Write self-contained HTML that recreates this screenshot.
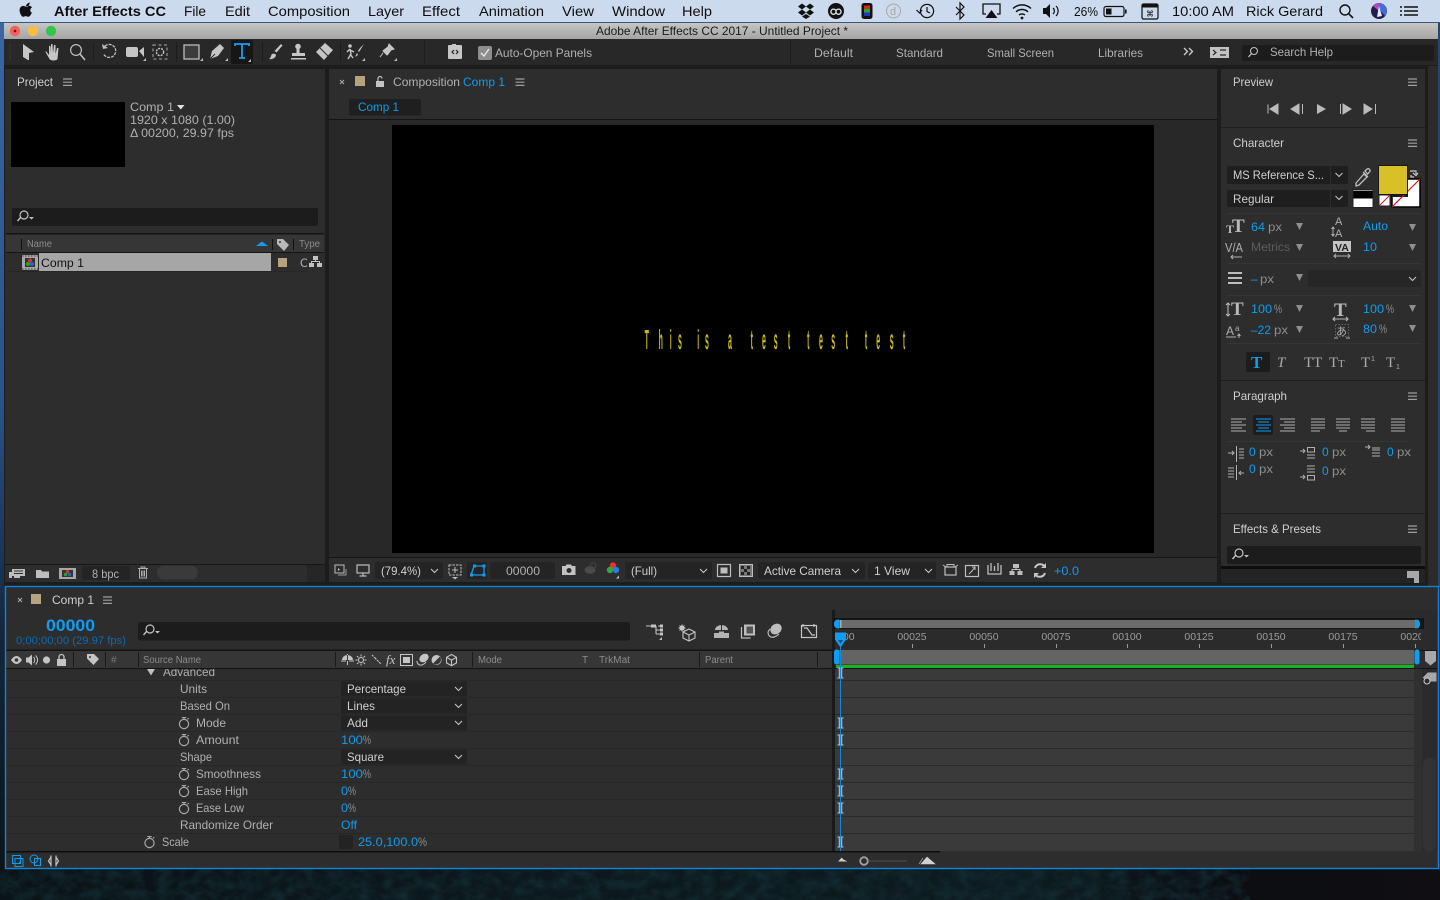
<!DOCTYPE html>
<html><head><meta charset="utf-8"><title>After Effects</title>
<style>
html,body{margin:0;padding:0;background:#111;overflow:hidden}
svg{display:block;position:absolute;left:0;top:0}
text{font-family:"Liberation Sans","DejaVu Sans",sans-serif;white-space:pre}
.m{font-size:14px;fill:#0e0e10}
.p{font-size:12px;fill:#b0b0b0}
.w{font-size:12px;fill:#cfcfcf}
.b{font-size:12px;fill:#109cf0}
.g{font-size:12px;fill:#8e8e8e}
.s{font-size:10px;fill:#8c8c8c}
.r{font-size:10.5px;fill:#9a9a9a}
.i{fill:#bdbdbd}
.l{fill:none;stroke:#bdbdbd;stroke-width:1.2}
.u{fill:none;stroke:#109cf0;stroke-width:1.3}
</style></head><body>
<svg width="1440" height="900" viewBox="0 0 1440 900" xmlns="http://www.w3.org/2000/svg">
<defs>
<linearGradient id="edge" x1="0" y1="0" x2="0" y2="1"><stop offset="0" stop-color="#3a66a4"/><stop offset=".45" stop-color="#2b5289"/><stop offset=".72" stop-color="#14263c"/><stop offset="1" stop-color="#0b1418"/></linearGradient>
<linearGradient id="tb" x1="0" y1="0" x2="0" y2="1"><stop offset="0" stop-color="#c6c6c6"/><stop offset="1" stop-color="#a4a4a4"/></linearGradient>
<linearGradient id="forestfade" x1="0" y1="0" x2="1" y2="0"><stop offset="0" stop-color="#0a1316"/><stop offset=".72" stop-color="#0d1c20"/><stop offset=".85" stop-color="#0b0e11"/><stop offset="1" stop-color="#100e12"/></linearGradient>
<filter id="noise" x="0" y="0" width="100%" height="100%" color-interpolation-filters="sRGB"><feTurbulence type="fractalNoise" baseFrequency=".07 .1" numOctaves="3" seed="4"/><feColorMatrix values="0 0 0 0 .07  0 0 0 0 .17  0 0 0 0 .2  1.8 0 0 0 -.6"/></filter>
<g id="h"><path d="M0 0h9M0 3.2h9M0 6.4h9" stroke="#9e9e9e" stroke-width="1.2" fill="none"/></g>
<path id="c" d="M0 0l3.5 3.5L7 0" fill="none" stroke="#c4c4c4" stroke-width="1.1"/>
<path id="v" d="M0 0h7L3.5 7z" fill="#8f8f8f"/>
<g id="sw"><circle cx="0" cy="0" r="4.6" fill="none" stroke="#a8a8a8" stroke-width="1.2"/><path d="M-2.2-6.4h4.4M0-6.4v2M3.4-4.6l1.4-1.3" stroke="#a8a8a8" stroke-width="1.1" fill="none"/></g>
<path id="ib" d="M-3-5h6M-3 5h6M-1.2-5v10M1.2-5v10" fill="none" stroke="#a9c4d9" stroke-width="1.1"/>
<g id="srch"><circle cx="5" cy="-2" r="4" fill="none" stroke="#c2c2c2" stroke-width="1.2"/><path d="M2-.0L-1.5 4" stroke="#c2c2c2" stroke-width="1.4"/><path d="M10 0h5l-2.500 2.500z" fill="#c2c2c2"/></g>
<path id="corner" d="M0 3L3 3L3 0z" fill="#bdbdbd"/>
</defs>

<!-- desktop -->
<rect width="1440" height="900" fill="url(#forestfade)"/>
<rect y="869" width="1250" height="31" filter="url(#noise)"/>
<rect x="0" y="22" width="6" height="850" fill="url(#edge)"/>
<rect x="1438" y="22" width="2" height="565" fill="#26466f"/>

<!-- menu bar -->
<rect width="1440" height="22" fill="#cbdaec"/>
<rect y="22" width="1440" height="1" fill="#3a5878"/>
<path d="M28.400 5.600c.9-1 1.500-1.900 1.300-3-1 .1-2.200.7-2.900 1.600-.6.7-1.100 1.900-.9 2.900 1.100.1 1.900-.5 2.500-1.500zM31.600 13.100c-.5 1.300-2 3.700-3.200 3.700-1 0-1.400-.7-2.600-.7-1.300 0-1.600.7-2.600.7-1.400 0-3.600-3.300-3.600-6.600 0-2.900 1.900-4.300 3.600-4.300 1.200 0 2 .8 2.700.8.6 0 1.700-.9 3-.9.6 0 2.200.2 3.100 1.600-2.600 1.600-2.200 4.900.6 5.700z" fill="#101012"/>
<text class="m" x="54" y="16" textLength="112" lengthAdjust="spacingAndGlyphs" style="font-weight:bold">After Effects CC</text>
<text class="m" x="184" y="16" textLength="22" lengthAdjust="spacingAndGlyphs">File</text>
<text class="m" x="225" y="16" textLength="25" lengthAdjust="spacingAndGlyphs">Edit</text>
<text class="m" x="268" y="16" textLength="82" lengthAdjust="spacingAndGlyphs">Composition</text>
<text class="m" x="368" y="16" textLength="36" lengthAdjust="spacingAndGlyphs">Layer</text>
<text class="m" x="422" y="16" textLength="38" lengthAdjust="spacingAndGlyphs">Effect</text>
<text class="m" x="479" y="16" textLength="65" lengthAdjust="spacingAndGlyphs">Animation</text>
<text class="m" x="562" y="16" textLength="32" lengthAdjust="spacingAndGlyphs">View</text>
<text class="m" x="612" y="16" textLength="53" lengthAdjust="spacingAndGlyphs">Window</text>
<text class="m" x="682" y="16" textLength="30" lengthAdjust="spacingAndGlyphs">Help</text>
<!-- status icons -->
<path d="M798 6.500l4-3 4 3-4 3zM806 6.500l4-3 4 3-4 3zM798 12.500l4-3 4 3-4 3zM806 12.500l4-3 4 3-4 3zM802 16.500l4-2.500 4 2.500-4 2.500z" fill="#111"/>
<circle cx="836" cy="11" r="8" fill="#111"/><path d="M831 11a2.600 2.600 0 0 1 5 0 2.600 2.600 0 1 0 5 0 2.600 2.600 0 0 0-5 0 2.600 2.600 0 1 1-5 0z" fill="none" stroke="#dfe8f2" stroke-width="1.300"/>
<rect x="861.500" y="3" width="11" height="16" rx="2.500" fill="#111"/><rect x="864" y="5.500" width="6" height="3.500" fill="#d22"/><rect x="864" y="9" width="6" height="3.500" fill="#2a2"/><rect x="864" y="12.500" width="6" height="3.500" fill="#23c"/>
<circle cx="893.500" cy="11" r="7" fill="none" stroke="#a6a6a6" stroke-width="1"/><text x="890" y="15" style="font-size:11px;fill:#a6a6a6">d</text>
<circle cx="927" cy="11" r="6.600" fill="none" stroke="#111" stroke-width="1.200"/><path d="M927 7v4.500l3 1.500M916.500 10l3 3 2.500-3" fill="none" stroke="#111" stroke-width="1.200"/>
<path d="M956 7l8 8-4 4V3l4 4-8 8" fill="none" stroke="#111" stroke-width="1.200"/>
<path d="M986 14h-3V4h17v10h-3" fill="none" stroke="#111" stroke-width="1.300"/><path d="M991.500 10l6 8h-12z" fill="#111"/>
<path d="M1013 8.500a13 13 0 0 1 18 0M1016 11.800a9 9 0 0 1 12 0M1019 15a5 5 0 0 1 6 0" fill="none" stroke="#111" stroke-width="1.400"/><circle cx="1022" cy="18" r="1.400" fill="#111"/>
<path d="M1043 8h3l4-4v14l-4-4h-3z" fill="#111"/><path d="M1053 8a4 4 0 0 1 0 6M1056 6a7 7 0 0 1 0 10" fill="none" stroke="#111" stroke-width="1.200"/>
<text class="m" x="1074" y="16" style="font-size:13px" textLength="24" lengthAdjust="spacingAndGlyphs">26%</text>
<rect x="1104" y="6.500" width="20" height="10" rx="2" fill="none" stroke="#111" stroke-width="1.200"/><rect x="1106" y="8.500" width="5.500" height="6" fill="#111"/><rect x="1125" y="9.500" width="1.600" height="4" fill="#111"/>
<rect x="1142" y="4" width="16" height="15" rx="1.500" fill="none" stroke="#111" stroke-width="1.200"/><rect x="1142" y="4" width="16" height="3.500" fill="#111"/><text x="1146" y="16.500" style="font-size:8px;fill:#111">⌘</text>
<text class="m" x="1172" y="16" textLength="62" lengthAdjust="spacingAndGlyphs">10:00 AM</text>
<text class="m" x="1246" y="16" textLength="77" lengthAdjust="spacingAndGlyphs">Rick Gerard</text>
<circle cx="1345" cy="10" r="5" fill="none" stroke="#111" stroke-width="1.400"/><path d="M1349 14l4 4" stroke="#111" stroke-width="1.600"/>
<circle cx="1379" cy="11" r="8" fill="#20204a"/><path d="M1379 3a8 8 0 0 1 6 13l-6-7z" fill="#3f6fd8"/><path d="M1373 6a8 8 0 0 1 6-3l0 8z" fill="#b048c0"/><path d="M1377 17l2-11 3 10z" fill="#e8e8ff"/>
<path d="M1404 7h14M1404 11h14M1404 15h14M1400 7h2M1400 11h2M1400 15h2" stroke="#111" stroke-width="1.500" fill="none"/>

<!-- window -->
<rect x="4" y="23" width="1434" height="564" fill="#1c1c1c"/>
<rect x="4" y="23" width="1434" height="16" fill="url(#tb)"/>
<circle cx="15" cy="31" r="5.200" fill="#f5605a"/><circle cx="15" cy="31" r="1.300" fill="#6a1510"/>
<circle cx="33" cy="31" r="5.200" fill="#fcbc3f"/><circle cx="51" cy="31" r="5.200" fill="#33c748"/>
<text x="596" y="35" style="font-size:12px;fill:#1a1a1a" textLength="252" lengthAdjust="spacingAndGlyphs">Adobe After Effects CC 2017 - Untitled Project *</text>

<!-- toolbar -->
<rect x="4" y="39" width="1434" height="26" fill="#282828"/>
<path d="M10 44v17" stroke="#444" stroke-dasharray="1 1"/>
<path d="M93.500 42v20M176.500 42v20M262.500 42v20M340.500 42v20M424.500 40v24M790.500 40v24" stroke="#1d1d1d"/>
<path d="M23 44l11 8-5 1 0 7-1 0-5-3z" fill="#c6c6c6"/>
<path d="M46 51l3 4 0-9 1.500 0 .5 7 0-9 1.500 0 .5 9 1-8 1.500 0 0 9 1.500-6 1.500 0-1 11c-1 2-7 2-8 0l-4-7z" fill="#c6c6c6"/>
<circle cx="76" cy="50" r="5.400" class="l"/><path d="M80 54l5 6" stroke="#bdbdbd" stroke-width="1.600"/>
<path d="M105 46a6.500 6.500 0 1 1-1.500 8" fill="none" stroke="#bdbdbd" stroke-width="1.300" stroke-dasharray="3 1"/><path d="M102 44l1 5 5-1" fill="#bdbdbd"/>
<rect x="126" y="47" width="12" height="10" rx="2" fill="#c6c6c6"/><path d="M139 51l5-4v10z" fill="#c6c6c6"/><use href="#corner" x="143" y="58"/>
<rect x="153" y="45" width="14" height="14" fill="none" stroke="#aaa" stroke-dasharray="3 2.500"/><circle cx="160" cy="52" r="3.600" fill="none" stroke="#c6c6c6" stroke-width="1.400" stroke-dasharray="2 1"/>
<rect x="184" y="45" width="15" height="14" fill="#3c3c3c" stroke="#bdbdbd" stroke-width="1.300"/><use href="#corner" x="200" y="58"/>
<path d="M210 59l2-8 8-7 4 4-6 8z" fill="#c6c6c6"/><path d="M210 59l5-5" stroke="#282828"/><use href="#corner" x="225" y="58"/>
<rect x="231" y="40" width="22" height="24" rx="2" fill="#161616"/>
<path d="M235 46v-2h14v2M242 44v14M239 58h6" fill="none" stroke="#1a9cf0" stroke-width="1.800"/><use href="#corner" x="248" y="59"/>
<path d="M281 44l1.500 1.500-6 7-2-1.500zM272 54c2-1 4 0 4 1.500-1 3-4 4-7 3.500 2-1 1.500-3 3-5z" fill="#c6c6c6"/>
<circle cx="298" cy="46.500" r="2.800" fill="#c6c6c6"/><rect x="296.500" y="48" width="3" height="5" fill="#c6c6c6"/><rect x="292" y="53" width="13" height="3" fill="#c6c6c6"/><rect x="291" y="58" width="15" height="1.500" fill="#c6c6c6"/>
<path d="M316 52l9-9 8 7-9 10z" fill="#c6c6c6"/><path d="M320 48l8 8" stroke="#282828"/>
<circle cx="350" cy="46" r="1.800" fill="#c6c6c6"/><path d="M350 49l-3 3M350 49l1 5-3 5M350 54l3 4M350 50l4 2" stroke="#c6c6c6" stroke-width="1.400" fill="none"/><path d="M364 44l-5 8-1-1 2-3zM357 53l-2 4 3-2z" fill="#c6c6c6"/><use href="#corner" x="362" y="58"/>
<path d="M389 44l5 5-3 1-3 4-1 1-4-4 1-1 4-3zM383 53l-3 4" fill="#c6c6c6" stroke="#c6c6c6"/><use href="#corner" x="394" y="58"/>
<rect x="448" y="45" width="14" height="14" rx="1" fill="#c6c6c6"/><path d="M452 45h4v-1h-4z" fill="#c6c6c6"/><path d="M454 50l-2 2 2 2M456 50l2 2-2 2" stroke="#282828" fill="none" stroke-width="1.200"/>
<rect x="478" y="46" width="14" height="14" rx="2" fill="#8e8e8e"/><path d="M481 53l3 3 5-7" stroke="#e4e4e4" stroke-width="1.500" fill="none"/>
<text class="p" x="495" y="57" textLength="97" lengthAdjust="spacingAndGlyphs">Auto-Open Panels</text>
<text class="p" x="814" y="57" textLength="39" lengthAdjust="spacingAndGlyphs">Default</text>
<text class="p" x="896" y="57" textLength="47" lengthAdjust="spacingAndGlyphs">Standard</text>
<text class="p" x="987" y="57" textLength="67" lengthAdjust="spacingAndGlyphs">Small Screen</text>
<text class="p" x="1098" y="57" textLength="45" lengthAdjust="spacingAndGlyphs">Libraries</text>
<path d="M1184 48l3.500 3.500-3.500 3.500M1189 48l3.500 3.500-3.500 3.500" fill="none" stroke="#d0d0d0" stroke-width="1.300"/>
<rect x="1210" y="47" width="19" height="11" fill="#c2c2c2"/><path d="M1213 50l3 2.500-3 2.500M1220 50h6M1220 55h6" stroke="#282828" fill="none" stroke-width="1.200"/>
<rect x="1242" y="45" width="192" height="16" rx="2" fill="#1c1c1c"/>
<circle cx="1254" cy="51" r="3.500" fill="none" stroke="#bdbdbd" stroke-width="1.100"/><path d="M1251.500 53.500l-3 3.500" stroke="#bdbdbd" stroke-width="1.300"/>
<text class="p" x="1270" y="56" textLength="63" lengthAdjust="spacingAndGlyphs">Search Help</text>

<!-- project panel -->
<rect x="5" y="69" width="320" height="513" fill="#2d2d2d"/>
<text class="w" x="17" y="86" textLength="36" lengthAdjust="spacingAndGlyphs">Project</text>
<use href="#h" x="63" y="79"/>
<rect x="11" y="102" width="114" height="65" fill="#000"/>
<text class="p" x="130" y="111" textLength="44" lengthAdjust="spacingAndGlyphs">Comp 1</text>
<path d="M177 105h7.500l-3.750 4.500z" fill="#e4e4e4"/>
<text class="p" x="130" y="124" textLength="105" lengthAdjust="spacingAndGlyphs">1920 x 1080 (1.00)</text>
<text class="p" x="130" y="137" textLength="104" lengthAdjust="spacingAndGlyphs">Δ 00200, 29.97 fps</text>
<rect x="12" y="208" width="306" height="18" rx="2" fill="#1c1c1c"/>
<use href="#srch" x="19" y="217"/>
<rect x="6" y="233" width="318" height="1.500" fill="#141414"/>
<rect x="6" y="234.500" width="318" height="17.500" fill="#363636"/>
<rect x="6" y="252" width="318" height="1" fill="#141414"/>
<path d="M21.500 239v11M272.500 239v11M293.500 239v11" stroke="#111"/>
<text class="s" x="27" y="247" textLength="25" lengthAdjust="spacingAndGlyphs">Name</text>
<path d="M256 246l6-4.500 6 4.500z" fill="#109cf0"/>
<path d="M277 239h6l6 6-5 6-7-7z" fill="#b8b8b8"/><circle cx="280" cy="242" r="1" fill="#363636"/>
<text class="s" x="299" y="247" textLength="21" lengthAdjust="spacingAndGlyphs">Type</text>
<rect x="6" y="271" width="318" height="1" fill="#262626"/>
<rect x="22" y="255" width="16" height="15" fill="#a8a8a8"/><path d="M22 256h16M22 269h16" stroke="#333" stroke-dasharray="1.500 1.500"/>
<rect x="25" y="258" width="10" height="9" fill="#333"/><circle cx="30" cy="260.500" r="2" fill="#d33"/><circle cx="28" cy="264" r="2" fill="#2a2"/><circle cx="32" cy="264" r="2" fill="#26c"/>
<rect x="39" y="253" width="232" height="18" fill="#a6a6a6"/>
<text x="41" y="267" style="font-size:12px;fill:#111" textLength="43" lengthAdjust="spacingAndGlyphs">Comp 1</text>
<rect x="278" y="258" width="9" height="9" fill="#b7a37f"/>
<text class="p" x="300" y="267">C</text>
<rect x="307" y="254" width="16" height="18" fill="#2d2d2d"/>
<rect x="313" y="256" width="5" height="4" fill="#c2c2c2"/><rect x="309" y="263" width="5" height="4" fill="#c2c2c2"/><rect x="317" y="263" width="5" height="4" fill="#c2c2c2"/><path d="M315.500 260v1.500h-4v2M315.500 261.500h4v2" stroke="#c2c2c2" fill="none"/>
<!-- project footer -->
<rect x="5" y="564" width="320" height="1" fill="#161616"/>
<rect x="307" y="565" width="18" height="17" fill="#262626"/>
<rect x="12" y="569" width="13" height="7" fill="#bdbdbd"/><rect x="9" y="572" width="3" height="6" fill="#bdbdbd"/><path d="M14 571h9M14 573.500h9" stroke="#2d2d2d"/><rect x="14" y="576" width="6" height="2" fill="#bdbdbd"/>
<path d="M36 570h5l1 1.500h7v6.500h-13z" fill="#bdbdbd"/>
<rect x="59" y="568" width="17" height="11" fill="#a8a8a8"/><rect x="62" y="570" width="11" height="7" fill="#333"/><circle cx="67.500" cy="571.500" r="1.700" fill="#d33"/><circle cx="65.500" cy="574.500" r="1.700" fill="#2a2"/><circle cx="69.500" cy="574.500" r="1.700" fill="#26c"/>
<rect x="82" y="566" width="48" height="14" rx="2" fill="#242424"/>
<text class="p" x="92" y="578" textLength="27" lengthAdjust="spacingAndGlyphs">8 bpc</text>
<path d="M138 568.500h10M141 568.500v-1.500h4v1.500M139.500 569v9h7v-9M141.500 570.500v6M143 570.500v6M144.500 570.500v6" fill="none" stroke="#b0b0b0"/>
<rect x="157" y="565.500" width="41" height="14" rx="7" fill="#3a3a3a"/>

<!-- composition panel -->
<rect x="329" y="69" width="888" height="513" fill="#2d2d2d"/>
<path d="M340 80l4 4M344 80l-4 4" stroke="#aaa"/>
<rect x="355" y="76" width="10" height="10" fill="#b7a37f"/>
<rect x="376" y="81" width="8" height="6" fill="#c2c2c2"/><path d="M378 81v-2.500a2 2 0 0 1 4 0" fill="none" stroke="#c2c2c2" stroke-width="1.200"/>
<text class="p" x="393" y="86" textLength="67" lengthAdjust="spacingAndGlyphs">Composition</text>
<text class="b" x="463" y="86" textLength="42" lengthAdjust="spacingAndGlyphs">Comp 1</text>
<use href="#h" x="515.500" y="79"/>
<rect x="349" y="99" width="72" height="16.500" rx="2" fill="#1f1f1f"/>
<text class="b" x="358" y="111" textLength="41" lengthAdjust="spacingAndGlyphs">Comp 1</text>
<rect x="329" y="119" width="888" height="1" fill="#151515"/>
<rect x="329" y="120" width="888" height="438" fill="#282828"/>
<rect x="392" y="125" width="762" height="428" fill="#000"/>
<g transform="scale(.25 1)"><text x="2587 2643 2683 2720 2760 2793 2828 2880 2920 2960 3007 3056 3103 3156 3200 3233 3284 3333 3387 3430 3464 3513 3567 3616" y="349" text-anchor="middle" style="font-size:28px;fill:#c9ba1c;font-weight:bold">This is a test test test</text></g>
<rect x="329" y="557" width="888" height="1" fill="#151515"/>
<!-- comp footer -->
<g>
<rect x="335" y="565" width="9" height="8" fill="none" stroke="#bdbdbd"/><path d="M338 568v3l2-1.500z" fill="#bdbdbd"/><path d="M346 569v6h-8" fill="none" stroke="#999"/>
<rect x="357" y="565" width="12" height="8" fill="none" stroke="#bdbdbd" stroke-width="1.200"/><path d="M363 573v2.500M359.500 576h7" stroke="#bdbdbd" stroke-width="1.200"/>
<rect x="375" y="562" width="68" height="17" rx="2" fill="#242424"/>
<text class="w" x="381" y="575" textLength="40" lengthAdjust="spacingAndGlyphs">(79.4%)</text>
<use href="#c" x="431" y="569"/>
<rect x="449" y="565" width="12" height="10" fill="none" stroke="#bdbdbd" stroke-dasharray="2.500 1"/><path d="M452 570h6M455 567v6" stroke="#bdbdbd"/><path d="M452 577h6l-3 2.500z" fill="#bdbdbd"/>
<rect x="467" y="562" width="20" height="17" rx="2" fill="#242424"/><path d="M471 575l3-9h10v9z" class="u"/>
<rect x="470" y="573.500" width="3" height="3" fill="#109cf0"/><rect x="473" y="564.500" width="3" height="3" fill="#109cf0"/><rect x="482.500" y="564.500" width="3" height="3" fill="#109cf0"/><rect x="482.500" y="573.500" width="3" height="3" fill="#109cf0"/>
<rect x="490" y="562" width="65" height="17" rx="2" fill="#242424"/>
<text class="p" x="506" y="575" textLength="34" lengthAdjust="spacingAndGlyphs">00000</text>
<path d="M562 566h3.500l1-1.500h4.500l1 1.500h3.500v9h-13.500z" fill="#c2c2c2"/><circle cx="569" cy="570.500" r="2.500" fill="#2d2d2d"/>
<ellipse cx="590" cy="570" rx="5.500" ry="3.800" fill="#4a4a4a"/><circle cx="593" cy="565.500" r="2.800" fill="none" stroke="#444"/>
<circle cx="613" cy="565.500" r="3.200" fill="#e3352b"/><circle cx="610" cy="570" r="3.200" fill="#2fa945"/><circle cx="616" cy="570" r="3.200" fill="#2a7be6"/><use href="#corner" x="616" y="575.500"/>
<rect x="625" y="562" width="87" height="17" rx="2" fill="#242424"/>
<text class="w" x="631" y="575" textLength="26" lengthAdjust="spacingAndGlyphs">(Full)</text>
<use href="#c" x="700" y="569"/>
<rect x="717.500" y="564.500" width="13" height="12" fill="none" stroke="#bdbdbd" stroke-width="1.200"/><rect x="720.500" y="567.500" width="7" height="6" fill="#bdbdbd"/>
<rect x="739.500" y="564.500" width="13" height="12" fill="#777" stroke="#bdbdbd" stroke-width="1"/><path d="M741 566h3v3h-3zM747 566h3v3h-3zM744 569h3v3h-3zM741 572h3v3h-3zM747 572h3v3h-3z" fill="#222"/>
<rect x="758" y="562" width="107" height="17" rx="2" fill="#242424"/>
<text class="w" x="764" y="575" textLength="77" lengthAdjust="spacingAndGlyphs">Active Camera</text>
<use href="#c" x="852" y="569"/>
<rect x="868" y="562" width="68" height="17" rx="2" fill="#242424"/>
<text class="w" x="874" y="575" textLength="36" lengthAdjust="spacingAndGlyphs">1 View</text>
<use href="#c" x="925" y="569"/>
<rect x="945" y="567" width="11" height="8" fill="none" stroke="#bdbdbd" stroke-width="1.200"/><path d="M943 565l3 2M958 565l-3 2M947 567v-2.500h7V567" fill="none" stroke="#bdbdbd"/>
<rect x="965.500" y="565.500" width="13" height="11" fill="none" stroke="#bdbdbd" stroke-width="1.200"/><path d="M969 574l3-3 3-4M972 567h3v3" fill="none" stroke="#bdbdbd"/>
<path d="M988 565v9h13v-9M991 563v8M994.500 566v5M998 563v8" fill="none" stroke="#bdbdbd" stroke-width="1.300"/>
<rect x="1013" y="564" width="6" height="4" fill="#bdbdbd"/><rect x="1009.500" y="571" width="5" height="4" fill="#bdbdbd"/><rect x="1017.500" y="571" width="5" height="4" fill="#bdbdbd"/><path d="M1016 568v1.500h-4v2M1016 569.500h4v2" stroke="#bdbdbd" fill="none"/>
<path d="M1035 568a5.500 5.500 0 0 1 10-1M1045 573a5.500 5.500 0 0 1-10 1" fill="none" stroke="#c6c6c6" stroke-width="2"/><path d="M1046 563v5h-5zM1034 578v-5h5z" fill="#c6c6c6"/>
<text class="b" x="1054" y="575" textLength="25" lengthAdjust="spacingAndGlyphs">+0.0</text>
</g>

<!-- right column -->
<rect x="1428" y="66" width="10" height="520" fill="#2b2b2b"/>
<rect x="1221" y="69" width="204" height="58" fill="#2d2d2d"/>
<rect x="1221" y="127" width="204" height="1" fill="#1f1f1f"/>
<rect x="1221" y="128" width="204" height="438" fill="#2d2d2d"/>
<rect x="1221" y="566" width="204" height="3" fill="#0d0d0d"/>
<rect x="1221" y="569" width="204" height="14" fill="#242424"/>
<text class="w" x="1233" y="86" textLength="40" lengthAdjust="spacingAndGlyphs">Preview</text>
<use href="#h" x="1408" y="79"/>
<path d="M1268 104.500v9M1270 109l8-5v10z" fill="#bbb" stroke="#bbb" stroke-width="1"/>
<path d="M1291 109l8-5v10zM1302.500 104v10" fill="#bbb" stroke="#bbb" stroke-width="1"/>
<path d="M1317 104l9 5-9 5z" fill="#bbb"/>
<path d="M1340.500 104v10M1343 104l8 5-8 5z" fill="#bbb" stroke="#bbb" stroke-width="1"/>
<path d="M1364 104l8 5-8 5zM1375.500 104v10" fill="#bbb" stroke="#bbb" stroke-width="1"/>
<text class="w" x="1233" y="147" textLength="51" lengthAdjust="spacingAndGlyphs">Character</text>
<use href="#h" x="1408" y="140"/>
<rect x="1227" y="166" width="121" height="18" rx="2" fill="#1e1e1e"/><path d="M1330.500 166v18" stroke="#2d2d2d"/>
<text class="w" x="1233" y="179" textLength="91" lengthAdjust="spacingAndGlyphs">MS Reference S...</text>
<use href="#c" x="1335.500" y="173"/>
<rect x="1227" y="190" width="121" height="17" rx="2" fill="#1e1e1e"/><path d="M1330.500 190v17" stroke="#2d2d2d"/>
<text class="w" x="1233" y="203" textLength="41" lengthAdjust="spacingAndGlyphs">Regular</text>
<use href="#c" x="1335.500" y="196"/>
<path d="M1356 183l8-9 3 3-8 8-3 1zM1365 171l2-2c2-1 4 1 2.500 3l-2 2zM1363 172l5 5" fill="none" stroke="#bdbdbd" stroke-width="1.300"/>
<rect x="1353" y="190" width="20" height="17.500" fill="#fff" stroke="#222"/><rect x="1353.500" y="191" width="19" height="7.500" fill="#000"/>
<rect x="1392" y="179" width="28" height="28" fill="#fff" stroke="#000" stroke-width="1.500"/><rect x="1392" y="189" width="16" height="8" fill="#1c1c1c"/>
<path d="M1392 207l28-28" stroke="#d9131a" stroke-width="1.200"/>
<rect x="1379" y="195" width="11" height="11" fill="#fff" stroke="#222"/><path d="M1379 206l11-11" stroke="#d9131a"/>
<rect x="1378.500" y="165.500" width="29" height="29" fill="#d8c026" stroke="#171717"/>
<path d="M1410 171h6v3M1414 177h-3v-2M1413 173l3 2.500 2-2.500" fill="none" stroke="#c8c8c8" stroke-width="1.200"/>
<rect x="1227" y="213" width="194" height="1" fill="#353535"/>
<text x="1226" y="233" style="font-size:12px;font-weight:bold;fill:#b8b8b8;font-family:'Liberation Serif',serif">T</text><text x="1232" y="232" style="font-size:19px;font-weight:bold;fill:#b8b8b8;font-family:'Liberation Serif',serif">T</text>
<text class="b" x="1251" y="231" textLength="14" lengthAdjust="spacingAndGlyphs">64</text><text class="g" x="1268" y="231" textLength="14" lengthAdjust="spacingAndGlyphs">px</text>
<use href="#v" x="1296" y="223"/>
<text x="1335" y="225" style="font-size:11px;fill:#b0b0b0">A</text><text x="1335" y="237" style="font-size:11px;fill:#b0b0b0">A</text><path d="M1333 227v9M1331.500 229l1.500-2 1.500 2M1331.500 234l1.500 2 1.500-2" fill="none" stroke="#b0b0b0"/>
<text class="b" x="1363" y="230" textLength="25" lengthAdjust="spacingAndGlyphs">Auto</text>
<use href="#v" x="1409" y="224"/>
<text x="1225" y="252" style="font-size:13px;fill:#b0b0b0" textLength="18" lengthAdjust="spacingAndGlyphs">V/A</text><path d="M1231 257h11M1233 255l-2 2 2 2" stroke="#b0b0b0" fill="none"/>
<text x="1251" y="251" style="font-size:12px;fill:#5c5c5c" textLength="39" lengthAdjust="spacingAndGlyphs">Metrics</text>
<use href="#v" x="1296" y="244"/>
<rect x="1333" y="241" width="18" height="11" fill="#c2c2c2"/><text x="1335" y="251" style="font-size:10.500px;font-weight:bold;fill:#222">VA</text><path d="M1334 256h16M1336 254l-2 2 2 2M1348 254l2 2-2 2" fill="none" stroke="#b0b0b0"/>
<text class="b" x="1363" y="251" textLength="14" lengthAdjust="spacingAndGlyphs">10</text>
<use href="#v" x="1409" y="244"/>
<rect x="1227" y="263" width="194" height="1" fill="#353535"/>
<path d="M1228 273h14M1228 278h14M1228 283h14" stroke="#bdbdbd" stroke-width="1.900"/>
<text class="b" x="1251" y="283">–</text><text class="g" x="1260" y="283" textLength="14" lengthAdjust="spacingAndGlyphs">px</text>
<use href="#v" x="1296" y="274"/>
<rect x="1308" y="270" width="113" height="17" rx="2" fill="#262626"/>
<use href="#c" x="1409" y="277"/>
<rect x="1227" y="295" width="194" height="1" fill="#353535"/>
<text x="1231" y="315" style="font-size:19px;font-weight:bold;fill:#b8b8b8;font-family:'Liberation Serif',serif">T</text><path d="M1228 303v13M1226 305l2-2 2 2M1226 314l2 2 2-2" fill="none" stroke="#b8b8b8" stroke-width="1.100"/>
<text class="b" x="1251" y="313" textLength="21" lengthAdjust="spacingAndGlyphs">100</text><text class="g" x="1274" y="313" textLength="8" lengthAdjust="spacingAndGlyphs">%</text>
<use href="#v" x="1296" y="305"/>
<text x="1334" y="316" style="font-size:19px;font-weight:bold;fill:#b8b8b8;font-family:'Liberation Serif',serif">T</text><path d="M1333 319h15M1335 317l-2 2 2 2M1346 317l2 2-2 2" fill="none" stroke="#b8b8b8" stroke-width="1.100"/>
<text class="b" x="1363" y="313" textLength="21" lengthAdjust="spacingAndGlyphs">100</text><text class="g" x="1386" y="313" textLength="8" lengthAdjust="spacingAndGlyphs">%</text>
<use href="#v" x="1409" y="305"/>
<text x="1226" y="335" style="font-size:12px;fill:#b0b0b0">A</text><text x="1235" y="331" style="font-size:8px;fill:#b0b0b0">a</text><path d="M1226 337h10M1239 338v-4M1237.500 336l1.500-2 1.500 2" fill="none" stroke="#b0b0b0"/>
<text class="b" x="1251" y="334" textLength="20" lengthAdjust="spacingAndGlyphs">–22</text><text class="g" x="1274" y="334" textLength="14" lengthAdjust="spacingAndGlyphs">px</text>
<use href="#v" x="1296" y="326"/>
<rect x="1335.500" y="324.500" width="13" height="12" fill="none" stroke="#666" stroke-dasharray="1.500 1.500"/><text x="1336" y="335" style="font-size:11px;fill:#b0b0b0;font-family:'Noto Sans CJK JP',sans-serif">あ</text><path d="M1334 338h4M1346 338h4" stroke="#b0b0b0"/>
<text class="b" x="1363" y="333" textLength="14" lengthAdjust="spacingAndGlyphs">80</text><text class="g" x="1379" y="333" textLength="8" lengthAdjust="spacingAndGlyphs">%</text>
<use href="#v" x="1409" y="325"/>
<rect x="1227" y="343" width="194" height="1" fill="#353535"/>
<rect x="1246" y="352" width="24" height="20" rx="2" fill="#1c1c1c"/>
<text x="1251" y="368" style="font-size:17px;font-weight:bold;fill:#109cf0;font-family:'Liberation Serif',serif">T</text>
<text x="1277" y="367" style="font-size:15px;font-style:italic;fill:#aaa;font-family:'Liberation Serif',serif">T</text>
<text x="1304" y="367" style="font-size:15px;fill:#aaa;font-family:'Liberation Serif',serif">TT</text>
<text x="1329" y="367" style="font-size:15px;fill:#aaa;font-family:'Liberation Serif',serif">T</text><text x="1338" y="367" style="font-size:11px;fill:#aaa;font-family:'Liberation Serif',serif">T</text>
<text x="1361" y="367" style="font-size:15px;fill:#aaa;font-family:'Liberation Serif',serif">T</text><text x="1371" y="361" style="font-size:7px;fill:#aaa">1</text>
<text x="1386" y="367" style="font-size:15px;fill:#aaa;font-family:'Liberation Serif',serif">T</text><text x="1396" y="369" style="font-size:7px;fill:#aaa">1</text>
<rect x="1221" y="380" width="204" height="1" fill="#1f1f1f"/>
<text class="w" x="1233" y="400" textLength="54" lengthAdjust="spacingAndGlyphs">Paragraph</text>
<use href="#h" x="1408" y="393"/>
<path d="M1231 419h15M1231 422h11M1231 425h15M1231 428h11M1231 431h15" stroke="#b0b0b0" fill="none"/>
<rect x="1253" y="415" width="20" height="20" rx="2" fill="#1c1c1c"/>
<path d="M1256 419h15M1258 422h11M1256 425h15M1258 428h11M1256 431h15" stroke="#109cf0" fill="none"/>
<path d="M1280 419h15M1284 422h11M1280 425h15M1284 428h11M1280 431h15" stroke="#b0b0b0" fill="none"/>
<path d="M1311 419h14M1311 422h14M1311 425h14M1311 428h14M1311 431h9" stroke="#b0b0b0" fill="none"/>
<path d="M1336 419h14M1336 422h14M1336 425h14M1336 428h14M1339 431h8" stroke="#b0b0b0" fill="none"/>
<path d="M1361 419h14M1361 422h14M1361 425h14M1361 428h14M1366 431h9" stroke="#b0b0b0" fill="none"/>
<path d="M1391 419h14M1391 422h14M1391 425h14M1391 428h14M1391 431h14" stroke="#b0b0b0" fill="none"/>
<rect x="1227" y="441" width="181" height="1" fill="#353535"/>
<path d="M1236.500 446v16M1239 449h5M1239 452h5M1239 455h5M1239 458h5M1228 453h6M1232 451l2 2-2 2" stroke="#b0b0b0" fill="none"/>
<text class="b" x="1249" y="456">0</text><text class="g" x="1259" y="456" textLength="14" lengthAdjust="spacingAndGlyphs">px</text>
<path d="M1300 451h5M1303 449l2 2-2 2" stroke="#b0b0b0" fill="none"/><rect x="1307.500" y="447.500" width="7" height="4.500" fill="none" stroke="#b0b0b0"/><path d="M1307 455h8M1307 458h8" stroke="#b0b0b0"/>
<text class="b" x="1322" y="456">0</text><text class="g" x="1332" y="456" textLength="14" lengthAdjust="spacingAndGlyphs">px</text>
<path d="M1365 447h5M1368 445l2 2-2 2M1372 450h8M1372 453h8M1372 456h8M1372 448h8" stroke="#b0b0b0" fill="none"/>
<text class="b" x="1387" y="456">0</text><text class="g" x="1397" y="456" textLength="14" lengthAdjust="spacingAndGlyphs">px</text>
<path d="M1236.500 465v15M1228 468h6M1228 471h6M1228 474h6M1228 477h6M1239 473h5M1241 471l-2 2 2 2" stroke="#b0b0b0" fill="none"/>
<text class="b" x="1249" y="473">0</text><text class="g" x="1259" y="473" textLength="14" lengthAdjust="spacingAndGlyphs">px</text>
<path d="M1307 466h8M1307 469h8M1307 472h8M1300 477h5M1303 475l2 2-2 2" stroke="#b0b0b0" fill="none"/><rect x="1307.500" y="475.500" width="7" height="4.500" fill="none" stroke="#b0b0b0"/>
<text class="b" x="1322" y="475">0</text><text class="g" x="1332" y="475" textLength="14" lengthAdjust="spacingAndGlyphs">px</text>
<rect x="1221" y="513" width="204" height="1" fill="#1f1f1f"/>
<text class="w" x="1233" y="533" textLength="88" lengthAdjust="spacingAndGlyphs">Effects &amp; Presets</text>
<use href="#h" x="1408" y="526"/>
<rect x="1227" y="546" width="194" height="18" rx="2" fill="#1c1c1c"/>
<use href="#srch" x="1234" y="555"/>
<path d="M1407 571h12v12h-5v-5h-7z" fill="#a8a8a8"/>

<!-- timeline panel -->
<rect x="5" y="586" width="1434" height="283" fill="#2d2d2d"/>
<path d="M18 598l4 4M22 598l-4 4" stroke="#aaa"/>
<rect x="31" y="594" width="10" height="10" fill="#b7a37f"/>
<text class="w" x="52" y="604" textLength="42" lengthAdjust="spacingAndGlyphs">Comp 1</text>
<use href="#h" x="103" y="597"/>
<text x="46" y="631" style="font-size:17px;font-weight:bold;fill:#109cf0" textLength="49" lengthAdjust="spacingAndGlyphs">00000</text>
<text x="16" y="644" style="font-size:11px;fill:#0a6cb3" textLength="110" lengthAdjust="spacingAndGlyphs">0;00;00;00 (29.97 fps)</text>
<rect x="138" y="622" width="492" height="18.500" rx="2" fill="#1c1c1c"/>
<use href="#srch" x="145" y="631"/>
<!-- timeline toolbar icons -->
<path d="M646 626h6M658 626h4M656 626v8M656 630h5M656 634h5" stroke="#c4c4c4" stroke-width="1.100" fill="none"/><rect x="651" y="624.500" width="5" height="3" fill="#c4c4c4"/><rect x="660" y="624.500" width="3" height="3" fill="#c4c4c4"/><rect x="660" y="628.500" width="3" height="3" fill="#c4c4c4"/><rect x="660" y="632.500" width="3" height="3" fill="#c4c4c4"/><use href="#corner" x="659" y="637"/>
<path d="M689 629l6 3v6l-6 3-6-3v-6zM683 632l6 3 6-3M689 635v6" fill="none" stroke="#c4c4c4" stroke-width="1.100"/><path d="M682 624l1 2 2-1-1 2 2 1-2 1 1 2-2-1-1 2-1-2-2 1 1-2-2-1 2-1-1-2 2 1z" fill="#c4c4c4"/>
<path d="M715 630a6.500 5 0 0 1 13 0zM714 633h5v-1.500h5v1.500h5v5h-15z" fill="#b4b4b4"/><path d="M721.500 625v6" stroke="#2d2d2d"/>
<rect x="744" y="624.500" width="11" height="11" fill="#bdbdbd"/><rect x="746.500" y="626.500" width="6.500" height="7" fill="#555"/><path d="M741.500 627v11h9" fill="none" stroke="#bdbdbd" stroke-width="1.300"/>
<ellipse cx="776" cy="629" rx="6" ry="5" fill="#bdbdbd" transform="rotate(-35 776 629)"/><path d="M768 632c0 4 3 6 6 5 2-.5 4-2 5-3M770 629c-1 1-1.500 2-2 3" fill="none" stroke="#bdbdbd" stroke-width="1.200"/>
<rect x="801.500" y="625.500" width="15" height="12" fill="none" stroke="#c4c4c4" stroke-width="1.200"/><path d="M804 628h3l5 7h3M803 624v3M814 624v3" fill="none" stroke="#c4c4c4" stroke-width="1.200"/>
<!-- column header -->
<rect x="6" y="650" width="826" height="18" fill="#363636"/>
<rect x="6" y="649.500" width="1432" height="1.500" fill="#141414"/>
<rect x="6" y="668" width="1432" height="1" fill="#141414"/>
<path d="M73.500 652v15M105.500 652v15M138.500 652v15M335.500 652v15M472.500 652v15M699.500 652v15M817.500 652v15" stroke="#1a1a1a"/>
<path d="M11 660c2-3 4-4 5.500-4s3.500 1 5.500 4c-2 3-4 4-5.500 4s-3.500-1-5.500-4z" fill="#c4c4c4"/><circle cx="16.500" cy="660" r="1.800" fill="#363636"/>
<path d="M26 657.500h2.500l3.500-3v11l-3.500-3H26z" fill="#c4c4c4"/><path d="M33.500 657a4 4 0 0 1 0 6M35.500 655.500a6 6 0 0 1 0 9" stroke="#c4c4c4" fill="none"/>
<circle cx="46.500" cy="660" r="3.600" fill="#c4c4c4"/>
<rect x="57" y="659" width="9" height="7" fill="#c4c4c4"/><path d="M59 659v-2a2.500 2.500 0 0 1 5 0v2" fill="none" stroke="#c4c4c4" stroke-width="1.300"/>
<path d="M87 654h7l5 5-5.500 6-6.500-6.500z" fill="#c4c4c4"/><circle cx="90" cy="657" r="1" fill="#363636"/>
<text class="s" x="111" y="663" style="fill:#777">#</text>
<text class="s" x="143" y="663" textLength="58" lengthAdjust="spacingAndGlyphs">Source Name</text>
<path d="M341 661h5M349 661h5M347.500 654v11" stroke="#c4c4c4" fill="none"/><path d="M342 660a5.500 5 0 0 1 11 0z" fill="#c4c4c4"/><path d="M347.500 655v6" stroke="#363636"/>
<circle cx="361" cy="660" r="2.500" fill="none" stroke="#c4c4c4" stroke-width="1.100"/><path d="M361 654.500v2M361 663.500v2M355.500 660h2M364.500 660h2M357 656l1.500 1.500M363.500 662.500l1.500 1.500M365 656l-1.500 1.500M358.500 662.500l-1.500 1.500" stroke="#c4c4c4"/>
<path d="M372 655l3 3M375 658l6 6" stroke="#c4c4c4" stroke-width="1.200" stroke-dasharray="2 1"/>
<text x="386" y="664" style="font-size:13px;font-style:italic;fill:#c4c4c4;font-family:'Liberation Serif',serif">fx</text>
<rect x="400.500" y="654.500" width="12" height="11" fill="none" stroke="#c4c4c4"/><rect x="403" y="657" width="7" height="6" fill="#c4c4c4"/>
<ellipse cx="424" cy="658" rx="5" ry="3.800" fill="#c4c4c4" transform="rotate(-35 424 658)"/><path d="M417 661c0 3 2 4.500 4.500 4 2-.5 3.500-1.500 4.500-3" fill="none" stroke="#c4c4c4"/>
<circle cx="436.500" cy="660" r="5" fill="#c4c4c4"/><path d="M433 663.500l7-7a5 5 0 0 1-7 7z" fill="#363636"/>
<path d="M451.500 654.500l5 2.800v5.600l-5 2.800-5-2.800v-5.600zM446.500 657.300l5 2.800 5-2.800M451.500 660v5.600" fill="none" stroke="#c4c4c4" stroke-width="1.100"/>
<text class="s" x="478" y="663" textLength="24" lengthAdjust="spacingAndGlyphs">Mode</text>
<text class="s" x="582" y="663">T</text>
<text class="s" x="599" y="663" textLength="31" lengthAdjust="spacingAndGlyphs">TrkMat</text>
<text class="s" x="705" y="663" textLength="28" lengthAdjust="spacingAndGlyphs">Parent</text>
<!-- rows left -->
<rect x="6" y="669" width="826" height="182" fill="#2d2d2d"/>
<path d="M6 680.500h826M6 697.500h826M6 714.500h826M6 731.500h826M6 748.500h826M6 765.500h826M6 782.500h826M6 799.500h826M6 816.500h826M6 833.500h826" stroke="#272727"/>
<clipPath id="rowclip"><rect x="6" y="669" width="826" height="182"/></clipPath>
<g clip-path="url(#rowclip)">
<path d="M147 669h8l-4 6.500z" fill="#c0c0c0"/>
<text class="p" x="163" y="676" textLength="52" lengthAdjust="spacingAndGlyphs">Advanced</text>
<text class="p" x="180" y="693" textLength="27" lengthAdjust="spacingAndGlyphs">Units</text>
<rect x="341" y="681.500" width="126" height="15" rx="1" fill="#232323"/>
<text class="w" x="347" y="693" textLength="59" lengthAdjust="spacingAndGlyphs">Percentage</text><use href="#c" x="455" y="687"/>
<text class="p" x="180" y="710" textLength="50" lengthAdjust="spacingAndGlyphs">Based On</text>
<rect x="341" y="698.500" width="126" height="15" rx="1" fill="#232323"/>
<text class="w" x="347" y="710" textLength="28" lengthAdjust="spacingAndGlyphs">Lines</text><use href="#c" x="455" y="704"/>
<use href="#sw" x="184" y="724"/>
<text class="p" x="196" y="727" textLength="30" lengthAdjust="spacingAndGlyphs">Mode</text>
<rect x="341" y="715.500" width="126" height="15" rx="1" fill="#232323"/>
<text class="w" x="347" y="727" textLength="21" lengthAdjust="spacingAndGlyphs">Add</text><use href="#c" x="455" y="721"/>
<use href="#sw" x="184" y="741"/>
<text class="p" x="196" y="744" textLength="43" lengthAdjust="spacingAndGlyphs">Amount</text>
<text class="b" x="341" y="744" textLength="22" lengthAdjust="spacingAndGlyphs">100</text><text class="g" x="363" y="744" textLength="8" lengthAdjust="spacingAndGlyphs">%</text>
<text class="p" x="180" y="761" textLength="32" lengthAdjust="spacingAndGlyphs">Shape</text>
<rect x="341" y="749.500" width="126" height="15" rx="1" fill="#232323"/>
<text class="w" x="347" y="761" textLength="37" lengthAdjust="spacingAndGlyphs">Square</text><use href="#c" x="455" y="755"/>
<use href="#sw" x="184" y="775"/>
<text class="p" x="196" y="778" textLength="65" lengthAdjust="spacingAndGlyphs">Smoothness</text>
<text class="b" x="341" y="778" textLength="22" lengthAdjust="spacingAndGlyphs">100</text><text class="g" x="363" y="778" textLength="8" lengthAdjust="spacingAndGlyphs">%</text>
<use href="#sw" x="184" y="792"/>
<text class="p" x="196" y="795" textLength="52" lengthAdjust="spacingAndGlyphs">Ease High</text>
<text class="b" x="341" y="795" textLength="7" lengthAdjust="spacingAndGlyphs">0</text><text class="g" x="348" y="795" textLength="8" lengthAdjust="spacingAndGlyphs">%</text>
<use href="#sw" x="184" y="809"/>
<text class="p" x="196" y="812" textLength="48" lengthAdjust="spacingAndGlyphs">Ease Low</text>
<text class="b" x="341" y="812" textLength="7" lengthAdjust="spacingAndGlyphs">0</text><text class="g" x="348" y="812" textLength="8" lengthAdjust="spacingAndGlyphs">%</text>
<text class="p" x="180" y="829" textLength="93" lengthAdjust="spacingAndGlyphs">Randomize Order</text>
<text class="b" x="341" y="829" textLength="16" lengthAdjust="spacingAndGlyphs">Off</text>
<use href="#sw" x="149.500" y="843"/>
<text class="p" x="162" y="846" textLength="27" lengthAdjust="spacingAndGlyphs">Scale</text>
<rect x="339" y="835" width="14" height="14" fill="#232323"/>
<text class="b" x="358" y="846" textLength="60" lengthAdjust="spacingAndGlyphs">25.0,100.0</text><text class="g" x="418" y="846" textLength="9" lengthAdjust="spacingAndGlyphs">%</text>
</g>
<!-- left-right divider & bottom -->
<rect x="832" y="610" width="3" height="241" fill="#1a1a1a"/>
<rect x="6" y="851" width="934" height="1.500" fill="#0e0e0e"/>
<!-- timeline right -->
<rect x="835" y="610" width="603" height="40" fill="#2b2b2b"/>
<rect x="833" y="618" width="591" height="11" fill="#151515"/>
<rect x="836" y="620" width="583" height="8" fill="#6c6c6c"/>
<path d="M838 619.500a4 4 0 0 0-4 4v1a4 4 0 0 0 4 4h1v-9z" fill="#109cf0"/>
<path d="M1416 619.500a4 4 0 0 1 4 4v1a4 4 0 0 1-4 4h-1v-9z" fill="#109cf0"/>
<rect x="840" y="620" width="1.500" height="8" fill="#aaa"/>
<clipPath id="rul"><rect x="835" y="629" width="586" height="20"/></clipPath>
<g clip-path="url(#rul)">
<text class="r" x="840" y="640" text-anchor="middle">00000</text>
<text class="r" x="912" y="640" text-anchor="middle">00025</text>
<text class="r" x="984" y="640" text-anchor="middle">00050</text>
<text class="r" x="1056" y="640" text-anchor="middle">00075</text>
<text class="r" x="1127" y="640" text-anchor="middle">00100</text>
<text class="r" x="1199" y="640" text-anchor="middle">00125</text>
<text class="r" x="1271" y="640" text-anchor="middle">00150</text>
<text class="r" x="1343" y="640" text-anchor="middle">00175</text>
<text class="r" x="1415" y="640" text-anchor="middle">00200</text>
<path d="M912.500 644v4M984.500 644v4M1056.500 644v4M1127.500 644v4M1199.500 644v4M1271.500 644v4M1343.500 644v4M1415.500 644v4" stroke="#999"/>
</g>
<rect x="835" y="651" width="579" height="17" fill="#2b2b2b"/>
<rect x="836" y="650" width="578" height="14.500" fill="#646464"/>
<rect x="836" y="665" width="578" height="3" fill="#13b521"/>
<rect x="834" y="649.500" width="5" height="15" rx="2.500" fill="#109cf0"/>
<rect x="1414.500" y="649.500" width="5" height="15" rx="2.500" fill="#109cf0"/>
<rect x="835" y="669" width="579" height="182" fill="#3a3a3a"/>
<path d="M835 680.500h579M835 697.500h579M835 714.500h579M835 731.500h579M835 748.500h579M835 765.500h579M835 782.500h579M835 799.500h579M835 816.500h579M835 833.500h579" stroke="#2a2a2a"/>
<rect x="1414" y="669" width="8" height="182" fill="#303030"/>
<rect x="1422" y="669" width="15" height="182" fill="#2b2b2b"/>
<rect x="1423" y="758" width="13" height="93" rx="6" fill="#333"/>
<path d="M1425 651h11v10l-5.500 4.500-5.500-4.500z" fill="#a8a8a8"/>
<path d="M1423 678l5-5h8v8h-6" fill="#a8a8a8" stroke="#a8a8a8"/><circle cx="1427" cy="681" r="3" fill="#2b2b2b" stroke="#c8c8c8" stroke-width="1.100"/>
<use href="#ib" x="840.500" y="673"/><use href="#ib" x="840.500" y="723"/><use href="#ib" x="840.500" y="740"/><use href="#ib" x="840.500" y="774"/><use href="#ib" x="840.500" y="791"/><use href="#ib" x="840.500" y="808"/><use href="#ib" x="840.500" y="842"/>
<rect x="840" y="646" width="1" height="205" fill="#1587d8"/>
<path d="M835 632.500h11v7l-5.500 8-5.500-8z" fill="#109cf0"/>
<path d="M838 640h5l-2.500 3.500z" fill="#0a4f80"/>
<!-- timeline footer -->
<path d="M838 861.500l2-2 1.500-2 2 2 1 .5 3 1.500z" fill="#d0d0d0"/>
<circle cx="864" cy="861" r="3.800" fill="none" stroke="#a0a0a0" stroke-width="1.800"/><rect x="869" y="860" width="38" height="2" fill="#3d3d3d"/>
<path d="M919 864l4-6M921 864l6-7 8 7z" fill="#d0d0d0" stroke="#d0d0d0" stroke-width=".6"/>
<rect x="15" y="858.500" width="8" height="8" fill="none" stroke="#109cf0"/><rect x="12.500" y="855.500" width="8" height="8" fill="none" stroke="#109cf0"/><path d="M19 862.500h2M20 861.500v2" stroke="#109cf0"/>
<circle cx="34" cy="859" r="4" fill="none" stroke="#109cf0"/><rect x="34.500" y="858.500" width="6" height="7" fill="none" stroke="#109cf0"/>
<path d="M51 855.500v11M56 855.500v11M51 857l-2.500 4 2.500 4M56 857l2.500 4-2.500 4" fill="none" stroke="#c2c2c2" stroke-width="1.200"/>
<!-- border -->
<rect x="5.500" y="586.500" width="1433" height="282" fill="none" stroke="#0e86d8" stroke-width="1.400"/>
</svg>
</body></html>
